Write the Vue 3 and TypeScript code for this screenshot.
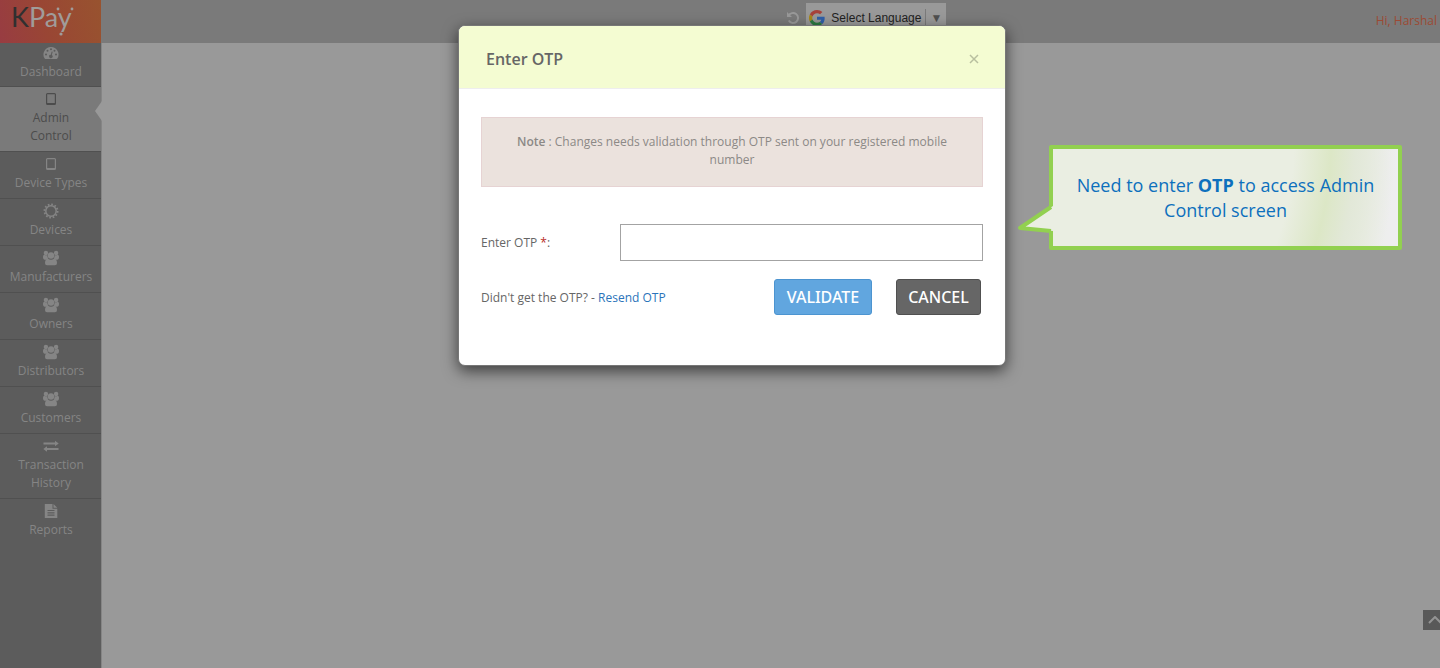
<script setup lang="ts">
import { ref } from 'vue'

type IconName = 'gauge' | 'tablet' | 'cog' | 'users' | 'exchange' | 'file'

interface MenuItem {
  label: string
  icon: IconName
  active?: boolean
  lead?: boolean
}

const items: MenuItem[] = [
  { label: 'Dashboard', icon: 'gauge', lead: true },
  { label: 'Admin Control', icon: 'tablet', active: true },
  { label: 'Device Types', icon: 'tablet' },
  { label: 'Devices', icon: 'cog' },
  { label: 'Manufacturers', icon: 'users' },
  { label: 'Owners', icon: 'users' },
  { label: 'Distributors', icon: 'users' },
  { label: 'Customers', icon: 'users' },
  { label: 'Transaction History', icon: 'exchange' },
  { label: 'Reports', icon: 'file' },
]

const otp = ref('')
</script>

<template>
  <div class="page">
    <header class="topbar">
      <a class="brand" href="#" aria-label="KPay">
        <span class="brand-k">K</span><span class="brand-pay">Pay</span>
        <svg class="brand-dots" viewBox="0 0 20 32" aria-hidden="true">
          <circle cx="3" cy="4" r="1.4" />
          <circle cx="17" cy="4" r="1.4" />
          <circle cx="6" cy="29" r="1.6" />
        </svg>
      </a>
      <div class="tools">
        <button class="reload" type="button" aria-label="Reload">
          <svg viewBox="0 0 14 14" fill="none" stroke="currentColor" stroke-width="2">
            <path d="M2.6 4.8A5 5 0 1 1 2.8 9.6" />
            <path d="M1 1v5h5z" fill="currentColor" stroke="none" />
          </svg>
        </button>
        <button class="language" type="button">
          <svg class="google" viewBox="0 0 48 48" aria-hidden="true">
            <path fill="#a7423a" d="M24 9.5c3.5 0 6.700 1.200 9.200 3.600l6.900-6.900C35.900 2.400 30.500 0 24 0 14.600 0 6.500 5.400 2.600 13.200l8 6.200C12.400 13.700 17.700 9.500 24 9.500z" />
            <path fill="#2f5fa8" d="M47 24.500c0-1.600-.2-3.100-.4-4.500H24v9h12.900c-.6 3-2.200 5.500-4.800 7.200l7.700 6C44.400 38 47 31.800 47 24.500z" />
            <path fill="#a78718" d="M10.500 28.600a14.500 14.500 0 0 1 0-9.200l-8-6.200a24 24 0 0 0 0 21.600z" />
            <path fill="#2c7c42" d="M24 48c6.500 0 11.900-2.100 15.900-5.800l-7.700-6c-2.200 1.500-4.900 2.300-8.200 2.300-6.300 0-11.600-4.200-13.500-9.900l-8 6.200C6.500 42.600 14.600 48 24 48z" />
          </svg>
          <span class="language-name">Select Language</span>
          <span class="language-arrow">▼</span>
        </button>
      </div>
      <span class="greeting">Hi, Harshal</span>
    </header>

    <div class="body">
      <nav class="sidebar" aria-label="Main">
        <a
          v-for="item in items"
          :key="item.label"
          href="#"
          class="item"
          :class="{ active: item.active, lead: item.lead }"
        >
          <svg class="icon" viewBox="0 0 16 16" fill="currentColor" aria-hidden="true">
            <path
              v-if="item.icon === 'gauge'"
              fill-rule="evenodd"
              d="M8 2a7.500 7.500 0 0 0-6.300 11.600q.2.400.6.400h11.400q.4 0 .6-.4A7.500 7.500 0 0 0 8 2zM8 3.200a1 1 0 1 1 0 2 1 1 0 0 1 0-2zM4.500 4.800a1 1 0 1 1 0 2 1 1 0 0 1 0-2zM11.500 4.800a1 1 0 1 1 0 2 1 1 0 0 1 0-2zM3 8.500a1 1 0 1 1 0 2 1 1 0 0 1 0-2zM13 8.500a1 1 0 1 1 0 2 1 1 0 0 1 0-2zM8.700 6.400l1 .3-.9 3.300a1.700 1.700 0 1 1-1-.3z"
            />
            <path
              v-else-if="item.icon === 'tablet'"
              fill-rule="evenodd"
              d="M4.500 2h7q1.500 0 1.500 1.500v9q0 1.500-1.500 1.500h-7Q3 14 3 12.500v-9Q3 2 4.500 2zM4.200 3.200v8.800h7.600V3.200z"
            />
            <g v-else-if="item.icon === 'cog'" fill="none" stroke="currentColor">
              <circle cx="8" cy="8" r="5.200" stroke-width="1.500" />
              <circle cx="8" cy="8" r="6.600" stroke-width="1.800" stroke-dasharray="1.700 1.756" />
            </g>
            <g v-else-if="item.icon === 'users'">
              <circle cx="2.900" cy="3" r="2.200" />
              <circle cx="13.100" cy="3" r="2.200" />
              <circle cx="8" cy="5.500" r="3.200" />
              <path d="M0 7.600Q-.2 5 1.400 4.700q1.600 1 3 .3-.2 2 1 3.800-1.200.1-2 .9H1.500Q.1 9.600 0 7.600zM16 7.600q.2-2.600-1.400-2.900-1.600 1-3 .3.2 2-1 3.800 1.200.1 2 .9h1.900q1.400-.1 1.500-2.100z" />
              <path d="M5 8.800q3 2 6 0 3 .2 3 4.200 0 2.200-2 2.200H4q-2 0-2-2.200 0-4 3-4.200z" />
            </g>
            <path
              v-else-if="item.icon === 'exchange'"
              d="M.5 4.500H12V2.700L15.700 5.500 12 8.200V6.500H.5zM15.500 10H4V8.200L.3 11 4 13.700V12h11.500z"
            />
            <path
              v-else
              fill-rule="evenodd"
              d="M1.800 1h7.700v4.800h4.800V15H1.800zM10.500 1l3.800 3.800h-3.800zM4.500 7v1.100h7V7zM4.500 9.300v1.100h7V9.300zM4.500 11.600v1.100h7v-1.100z"
            />
          </svg>
          <span class="item-label">{{ item.label }}</span>
        </a>
      </nav>
      <main class="content"></main>
    </div>

    <button class="to-top" type="button" aria-label="Back to top">
      <svg viewBox="0 0 14 8" fill="none" stroke="currentColor" stroke-width="2">
        <path d="M1 7l6-6 6 6" />
      </svg>
    </button>

    <div class="overlay">
      <section class="dialog" role="dialog" aria-labelledby="dialog-title">
        <header class="dialog-head">
          <h1 id="dialog-title">Enter OTP</h1>
          <button class="close" type="button" aria-label="Close">
            <svg viewBox="0 0 10 10" stroke="currentColor" stroke-width="1.500">
              <path d="M1 1l8 8M9 1L1 9" />
            </svg>
          </button>
        </header>
        <form class="dialog-body" @submit.prevent>
          <p class="note">
            <b>Note</b> : Changes needs validation through OTP sent on your registered mobile number
          </p>
          <div class="field">
            <label for="otp">Enter OTP <span class="required">*</span>:</label>
            <input id="otp" v-model="otp" type="text" autocomplete="off" />
          </div>
          <div class="actions">
            <p class="resend">Didn't get the OTP? - <a href="#">Resend OTP</a></p>
            <button class="btn validate" type="submit">VALIDATE</button>
            <button class="btn cancel" type="button">CANCEL</button>
          </div>
        </form>

        <aside class="callout">
          <p>Need to enter <b>OTP</b> to access Admin</p>
          <p>Control screen</p>
          <svg class="tail" viewBox="0 0 36 32" aria-hidden="true">
            <path d="M36 3L3 25l33 3z" fill="#eaeee2" />
            <path d="M34 4L3 25l31 3" fill="none" stroke="#92d050" stroke-width="4" stroke-linejoin="round" />
          </svg>
        </aside>
      </section>
    </div>
  </div>
</template>

<style>
body {
  margin: 0;
}
</style>

<style scoped>
.page {
  position: relative;
  display: flex;
  flex-direction: column;
  min-height: 100vh;
  overflow: hidden;
  background: #999;
  color: #666;
  font-family: "Open Sans", "Noto Sans", sans-serif;
  font-size: 12px;
  line-height: 18px;
}
.page *,
.page {
  box-sizing: border-box;
}
button {
  font: inherit;
  padding: 0;
  border: 0;
  background: none;
  cursor: pointer;
}
a {
  text-decoration: none;
}
p,
h1 {
  margin: 0;
}
svg {
  display: block;
}

.topbar {
  display: grid;
  grid-template-columns: 101px 1fr auto;
  align-items: start;
  height: 43px;
  background: #7a7a7a;
}
.brand {
  position: relative;
  height: 43px;
  padding: 1px 0 0 11px;
  background: linear-gradient(75deg, #983c42 0%, #994634 45%, #98532f 100%);
  font-family: Lato, sans-serif;
  font-size: 27px;
  line-height: 32px;
}
.brand-k {
  color: #303030;
}
.brand-pay {
  color: #a09c9a;
}
.brand-dots {
  position: absolute;
  left: 55px;
  top: 5px;
  width: 20px;
  height: 32px;
  fill: #a09c9a;
}
.tools {
  display: flex;
  justify-content: center;
  align-items: center;
  gap: 6px;
  padding: 3px 0 0 0;
  margin-left: 256px;
}
.reload {
  width: 14px;
  color: #999;
}
.reload svg {
  width: 14px;
  height: 14px;
}
.language {
  display: flex;
  align-items: center;
  height: 30px;
  padding: 0 4px 0 3px;
  background: #999;
  color: #222;
  font-family: "Liberation Sans", Arial, sans-serif;
  font-size: 12px;
}
.google {
  width: 16px;
  height: 16px;
  margin-right: 6px;
}
.language-arrow {
  margin-left: 4px;
  padding-left: 4px;
  border-left: 1px solid #7a7a7a;
  color: #505050;
}
.greeting {
  padding: 12px 3px 0 0;
  color: #9c4a34;
}

.body {
  flex: 1;
  display: grid;
  grid-template-columns: 102px 1fr;
}
.sidebar {
  background: #5c5c5c;
  border-right: 1px solid #858585;
}
.item {
  position: relative;
  display: flex;
  flex-direction: column;
  align-items: center;
  gap: 2px;
  padding: 4px 11px 6px 12px;
  border-bottom: 1px solid #505050;
  color: #858585;
  text-align: center;
}
.item:last-child {
  border-bottom: 0;
}
.lead {
  padding-top: 2px;
  padding-bottom: 5px;
}
.active {
  background: #7a7a7a;
  color: #4c4c4c;
}
.active::after {
  content: "";
  position: absolute;
  right: -1px;
  top: 14px;
  border: solid transparent;
  border-width: 10px 7px 10px 0;
  border-right-color: #999;
}
.icon {
  width: 16px;
  height: 16px;
}

.to-top {
  position: absolute;
  right: 0;
  bottom: 38px;
  width: 17px;
  height: 20px;
  padding-left: 5px;
  overflow: hidden;
  background: #595959;
  color: #949494;
}
.to-top svg {
  width: 14px;
  height: 8px;
}

.overlay {
  position: absolute;
  inset: 0;
  display: flex;
  justify-content: center;
  align-items: flex-start;
  padding: 25px 0 0 24px;
  pointer-events: none;
}
.dialog {
  position: relative;
  width: 548px;
  border: 1px solid #777;
  border-radius: 7px;
  background: #fff;
  box-shadow: 0 5px 15px rgba(0, 0, 0, 0.6);
  pointer-events: auto;
}
.dialog-head {
  display: flex;
  justify-content: space-between;
  align-items: center;
  height: 63px;
  padding: 3px 26px 0 27px;
  border-bottom: 1px solid #eee;
  border-radius: 6px 6px 0 0;
  background: #f4fcd2;
}
.dialog-head h1 {
  font-size: 16px;
  line-height: 20px;
  font-weight: 600;
}
.close {
  color: #b8bf9f;
}
.close svg {
  width: 10px;
  height: 10px;
}
.dialog-body {
  padding: 28px 22px 50px;
}
.note {
  min-height: 70px;
  padding: 15px 28px;
  border: 1px solid #e6d3d3;
  background: #ebe2dd;
  color: #8c8986;
  text-align: center;
}
.note b {
  font-weight: 600;
}
.field {
  display: grid;
  grid-template-columns: 139px 1fr;
  align-items: center;
  margin-top: 37px;
}
.field input {
  width: 100%;
  height: 37px;
  padding: 6px 12px;
  border: 1px solid #a3a3a3;
  background: #fff;
  color: inherit;
  font: inherit;
}
.required {
  color: #b92c28;
}
.actions {
  display: flex;
  align-items: center;
  margin-top: 18px;
  padding-right: 2px;
}
.resend {
  flex: 1;
  padding-top: 2px;
}
.resend a {
  color: #2b74ba;
}
.btn {
  height: 36px;
  border: 1px solid;
  border-radius: 3px;
  color: #fff;
  font-family: "Noto Sans", sans-serif;
  font-size: 16px;
  font-weight: 500;
}
.validate {
  width: 98px;
  border-color: #4c94d0;
  background: #61a6df;
}
.cancel {
  width: 85px;
  margin-left: 24px;
  border-color: #505050;
  background: #666;
}

.callout {
  position: absolute;
  left: calc(100% + 44px);
  top: 119px;
  width: 353px;
  padding: 24px 18px 23px;
  border: 4px solid #92d050;
  border-radius: 2px;
  background: radial-gradient(ellipse 310px 350px at -7px -10px, transparent 0 80%, #dce7c6 92%, #e2e8d8 100%, transparent 113%),
    linear-gradient(90deg, #eaeee2 0 85%, #eeeeef 98%);
  color: #0d70bd;
  font-size: 18px;
  line-height: 25px;
  text-align: center;
}
.tail {
  position: absolute;
  left: -36px;
  top: 54px;
  width: 36px;
  height: 32px;
}
</style>
